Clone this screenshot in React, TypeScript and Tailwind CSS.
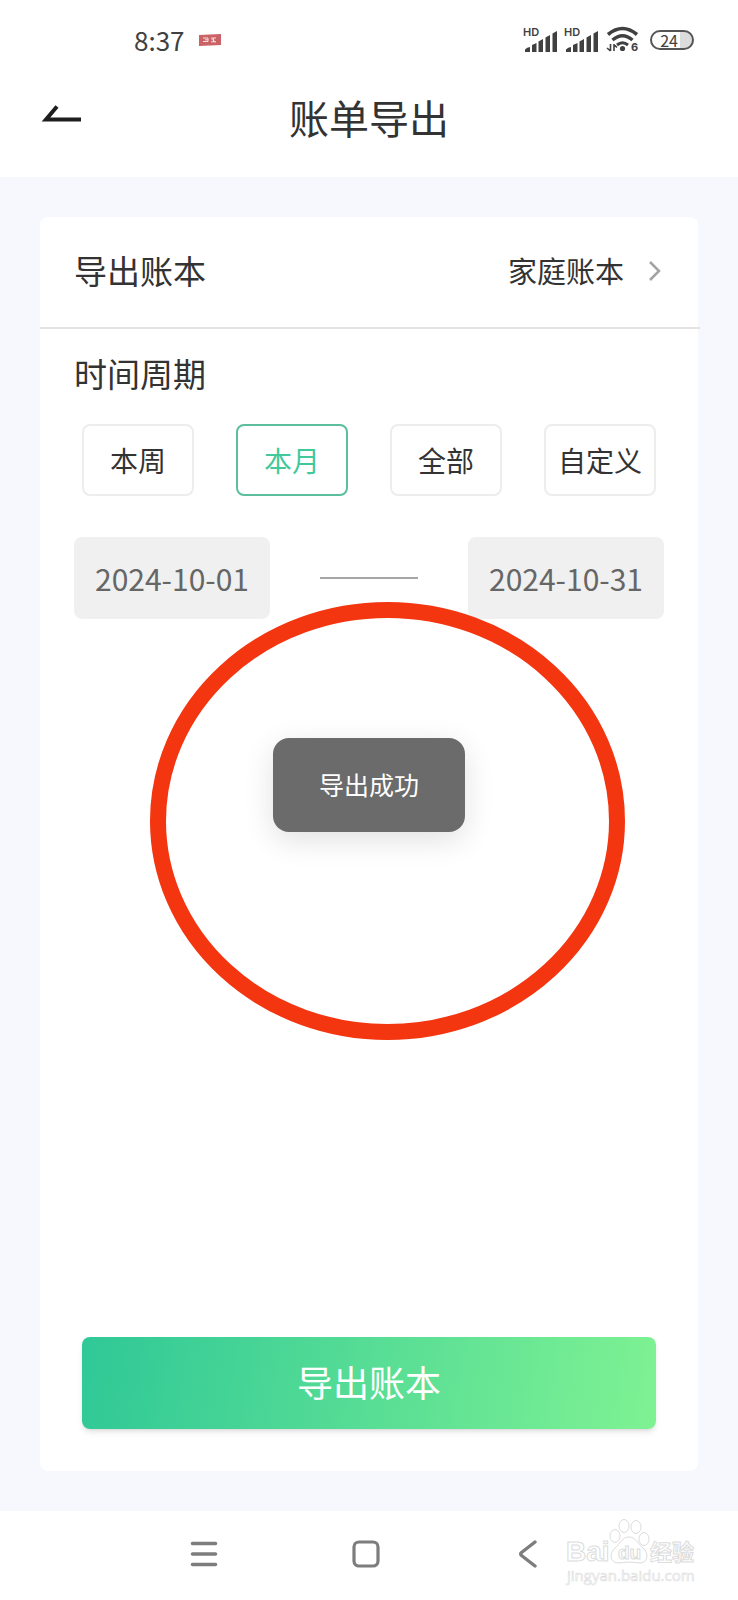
import React, { useState } from "react";

const periods = ["本周", "本月", "全部", "自定义"];

function Signal() {
  return (
    <svg width="36" height="32" viewBox="0 -4 36 32" fill="#404040">
      <text x="0" y="8" fontSize="11" fontWeight="600" fontFamily="Inter, sans-serif">
        HD
      </text>
      <path d="M2 24v-2.500q2-2.500 5-2.500v5z" />
      <path d="M9 24v-7l4.500-2v9z" />
      <path d="M15.500 24V13.500l4.500-2.500V24z" />
      <path d="M22.500 24V9.500L27 7v17z" />
      <path d="M29.500 24V5.500L34 3v21z" />
    </svg>
  );
}

function Wifi() {
  return (
    <svg width="34" height="32" viewBox="0 -2 34 32" fill="none" stroke="#404040">
      <path d="M2 8.500q14.500-12 29 0" strokeWidth="3.600" />
      <path d="M6.500 14q10-8.500 20 0" strokeWidth="3.400" />
      <path d="M11 19q5.500-4.500 11 0" strokeWidth="3" />
      <circle cx="16.500" cy="22.500" r="2.600" fill="#404040" stroke="none" />
      <path d="M4.500 18v7M1 22l3.500 3M8 25v-7M8 18.500l3 3" strokeWidth="1.600" />
      <text x="25" y="25" fontSize="11" fontWeight="700" fill="#404040" stroke="none" fontFamily="Inter, sans-serif">
        6
      </text>
    </svg>
  );
}

function StatusBar() {
  return (
    <div className="flex h-20 items-center pr-11 pl-[134px] text-[#404040]">
      <p className="text-[26px] leading-8">8:37</p>
      <svg className="ml-3.5" width="22" height="12" viewBox="0 0 22 12">
        <path d="M0 1l22-1v11L0 12z" fill="#cb6265" />
        <path d="M4 4h5v3.500H4M6 5.800h3M12 4h5M12 7.800h5M14.500 4v4M12.500 5l4 3" stroke="#f6dcdc" strokeWidth="1" fill="none" />
      </svg>
      <div className="ml-auto flex items-center">
        <Signal />
        <div className="ml-[5px]">
          <Signal />
        </div>
        <div className="ml-1.5">
          <Wifi />
        </div>
        <div className="ml-2.5 flex h-5 w-11 items-center justify-end rounded-full border-2 border-[#555] bg-[linear-gradient(90deg,#fff_70%,#dcdcdc_70%)] pr-3.5 text-base leading-4">
          24
        </div>
      </div>
    </div>
  );
}

function Watermark() {
  return (
    <svg
      className="pointer-events-none absolute right-9 bottom-2"
      width="138"
      height="76"
      viewBox="0 0 138 76"
      fill="#fff"
      stroke="#dcdcdc"
      fontFamily="'Liberation Sans', 'Noto Sans CJK SC', sans-serif"
      fontWeight="700"
    >
      <text x="2" y="45" fontSize="28">
        Bai
      </text>
      <path d="M65 21c7 0 9 7 14 11 6 5 5 15-3 15-4 0-7-1-11-1s-7 1-11 1c-8 0-9-10-3-15 5-4 7-11 14-11z" />
      <ellipse cx="51" cy="20" rx="5" ry="6.500" />
      <ellipse cx="60" cy="10" rx="5" ry="6.500" />
      <ellipse cx="72" cy="11" rx="5" ry="6.500" />
      <ellipse cx="80" cy="23" rx="5" ry="6.500" />
      <text x="54" y="43" fontSize="19">
        du
      </text>
      <text x="86" y="44" fontSize="22">
        经验
      </text>
      <text x="3" y="65" fontSize="15" strokeWidth="0.600" fontWeight="400" fontFamily="'Open Sans', sans-serif">
        jingyan.baidu.com
      </text>
    </svg>
  );
}

function App() {
  const [active, setActive] = useState("本月");

  return (
    <div
      lang="zh-CN"
      className="relative flex min-h-screen flex-col overflow-hidden bg-[#f6f8fd] font-['Noto_Sans_CJK_SC',sans-serif] text-[#333]"
    >
      <header className="bg-white">
        <StatusBar />
        <div className="grid h-[97px] grid-cols-[1fr_auto_1fr] items-start px-10">
          <button aria-label="返回" className="mt-6 w-11">
            <svg width="42" height="20" viewBox="0 0 42 20" fill="none" stroke="#1e1e1e" strokeWidth="4">
              <path d="M41 15.500H6L17 2.500" />
            </svg>
          </button>
          <h1 className="mt-2 text-[40px] leading-[58px]">账单导出</h1>
        </div>
      </header>

      <main className="flex flex-1 flex-col px-10 py-10">
        <section className="flex flex-1 flex-col rounded-lg bg-white">
          <button className="-mr-0.5 flex h-28 items-center border-b-2 border-[#e3e3e3] pr-[38px] pb-1 pl-[34px]">
            <span className="text-[33px] leading-10">导出账本</span>
            <span className="ml-auto text-[29px] leading-10">家庭账本</span>
            <svg className="ml-6" width="14" height="22" viewBox="0 0 14 22" fill="none" stroke="#a3a3a3" strokeWidth="2.500">
              <path d="M2 3l9 9-9 9" />
            </svg>
          </button>

          <h2 className="mt-6 px-[34px] text-[33px] leading-10">时间周期</h2>
          <div className="mt-[31px] flex justify-between px-[42px]">
            {periods.map((item) => (
              <button
                key={item}
                onClick={() => setActive(item)}
                className={
                  active === item
                    ? "h-[72px] w-28 rounded-lg border-2 border-[#5cbd9f] text-[28px] text-[#42c99b]"
                    : "h-[72px] w-28 rounded-lg border-2 border-[#ededed] text-[28px]"
                }
              >
                {item}
              </button>
            ))}
          </div>

          <div className="mt-[41px] flex items-center justify-between px-[34px] text-[30px] text-[#666]">
            <button className="h-[82px] w-[196px] rounded-lg bg-[#f0f0f0]">2024-10-01</button>
            <span className="h-0.5 w-[98px] bg-[#a6a6a6]" />
            <button className="h-[82px] w-[196px] rounded-lg bg-[#f0f0f0]">2024-10-31</button>
          </div>

          <button className="mx-[42px] mt-auto mb-[42px] h-[92px] rounded-lg bg-[linear-gradient(100deg,#2fc897,#7ff293)] pb-1 text-4xl text-white shadow-md">
            导出账本
          </button>
        </section>
      </main>

      <nav className="flex h-[89px] items-center bg-white pb-1 pl-[190px]">
        <button aria-label="最近任务">
          <svg width="28" height="28" viewBox="0 0 28 28" stroke="#7d7d7d" strokeWidth="3.600" strokeLinecap="round">
            <path d="M2.500 3.500h23M2.500 14h23M2.500 24.500h23" />
          </svg>
        </button>
        <button aria-label="主屏幕" className="ml-[134px]">
          <svg width="28" height="28" viewBox="0 0 28 28" fill="none" stroke="#7d7d7d" strokeWidth="3.200">
            <rect x="2" y="2" width="24" height="24" rx="5" />
          </svg>
        </button>
        <button aria-label="后退" className="ml-[138px]">
          <svg width="20" height="28" viewBox="0 0 20 28" fill="none" stroke="#7d7d7d" strokeWidth="3.400" strokeLinecap="round" strokeLinejoin="round">
            <path d="M17 2L3.500 12.500q-1.500 1.500 0 3L17 26" />
          </svg>
        </button>
      </nav>
      <Watermark />

      <svg
        className="pointer-events-none absolute top-[602px] left-[150px]"
        width="475"
        height="438"
        viewBox="0 0 475 438"
        fill="none"
        stroke="#f33510"
        strokeWidth="16"
      >
        <ellipse cx="237.500" cy="219" rx="229.500" ry="211" />
      </svg>
      <div
        role="status"
        className="absolute top-[738px] left-1/2 -translate-x-1/2 rounded-2xl bg-[#6b6b6b] px-[46px] pt-[26px] pb-7 text-[25px] leading-10 whitespace-nowrap text-white shadow-[0_8px_30px_rgba(0,0,0,0.12)]"
      >
        导出成功
      </div>
    </div>
  );
}

export default App;
